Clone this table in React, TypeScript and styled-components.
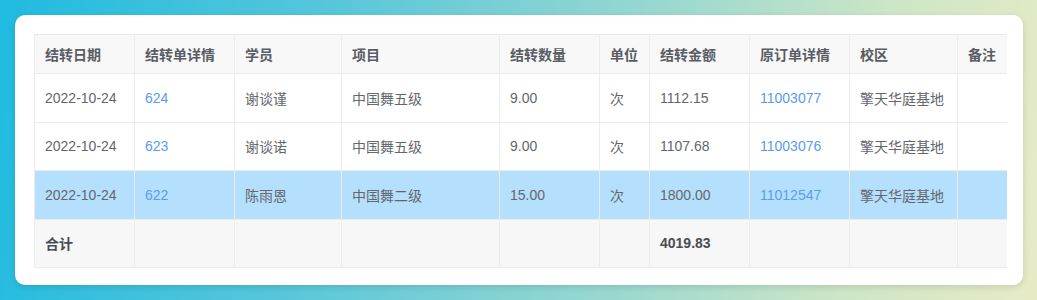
import React from "react";
import styled, { createGlobalStyle } from "styled-components";

const Global = createGlobalStyle`
  html, body { margin: 0; padding: 0; }
  body {
    width: 1037px;
    height: 300px;
    overflow: hidden;
    background: linear-gradient(100deg, #1fbbe0 0%, #56c6da 30%, #9cd9cf 62%, #cde6c6 82%, #e7ebc5 100%);
    font-family: "Liberation Sans", Arial, "Noto Sans CJK SC", sans-serif;
  }
`;

const Page = styled.div`
  padding: 15px 14px 16px 15px;
`;

const Card = styled.div`
  background: #fff;
  border-radius: 10px;
  box-shadow: 0 2px 6px rgba(0, 0, 0, 0.12);
  padding: 19px 16px 17px 19px;
`;

const Scroller = styled.div`
  width: 973px;
  overflow: hidden;
`;

const Table = styled.table`
  table-layout: fixed;
  width: 1023px;
  border-collapse: separate;
  border-spacing: 0;
  border-top: 1px solid #ececec;
  border-left: 1px solid #ececec;
  font-size: 14px;
`;

const Th = styled.th`
  height: 39px;
  box-sizing: border-box;
  padding: 0 10px;
  text-align: left;
  font-weight: 700;
  color: #585c64;
  background: #f8f8f9;
  border-right: 1px solid #ececec;
  border-bottom: 1px solid #ececec;
  white-space: nowrap;
`;

const Row = styled.tr<{ $active?: boolean; $footer?: boolean }>`
  background: ${(p) => (p.$active ? "#b5e0fd" : p.$footer ? "#f7f7f7" : "#fff")};
`;

const Td = styled.td<{ $bold?: boolean; $link?: boolean }>`
  height: 48.5px;
  box-sizing: border-box;
  padding: 0 10px;
  color: ${(p) => (p.$link ? "#5b9bf4" : p.$bold ? "#494c52" : "#64676c")};
  font-weight: ${(p) => (p.$bold ? 700 : 400)};
  border-right: 1px solid #ececec;
  border-bottom: 1px solid #ececec;
  white-space: nowrap;
`;

const widths = [100, 100, 107, 158, 100, 50, 100, 100, 108, 100];
const headers = ["结转日期", "结转单详情", "学员", "项目", "结转数量", "单位", "结转金额", "原订单详情", "校区", "备注"];

const rows = [
  ["2022-10-24", "624", "谢谈谨", "中国舞五级", "9.00", "次", "1112.15", "11003077", "擎天华庭基地", ""],
  ["2022-10-24", "623", "谢谈诺", "中国舞五级", "9.00", "次", "1107.68", "11003076", "擎天华庭基地", ""],
  ["2022-10-24", "622", "陈雨恩", "中国舞二级", "15.00", "次", "1800.00", "11012547", "擎天华庭基地", ""],
];

const footer = ["合计", "", "", "", "", "", "4019.83", "", "", ""];

export default function App() {
  return (
    <>
      <Global />
      <Page>
        <Card>
          <Scroller>
            <Table>
              <colgroup>
                {widths.map((w, i) => (
                  <col key={i} style={{ width: w }} />
                ))}
              </colgroup>
              <thead>
                <tr>
                  {headers.map((h) => (
                    <Th key={h}>{h}</Th>
                  ))}
                </tr>
              </thead>
              <tbody>
                {rows.map((r, ri) => (
                  <Row key={ri} $active={ri === 2}>
                    {r.map((c, ci) => (
                      <Td key={ci} $link={ci === 1 || ci === 7}>
                        {c}
                      </Td>
                    ))}
                  </Row>
                ))}
                <Row $footer>
                  {footer.map((c, ci) => (
                    <Td key={ci} $bold>
                      {c}
                    </Td>
                  ))}
                </Row>
              </tbody>
            </Table>
          </Scroller>
        </Card>
      </Page>
    </>
  );
}
